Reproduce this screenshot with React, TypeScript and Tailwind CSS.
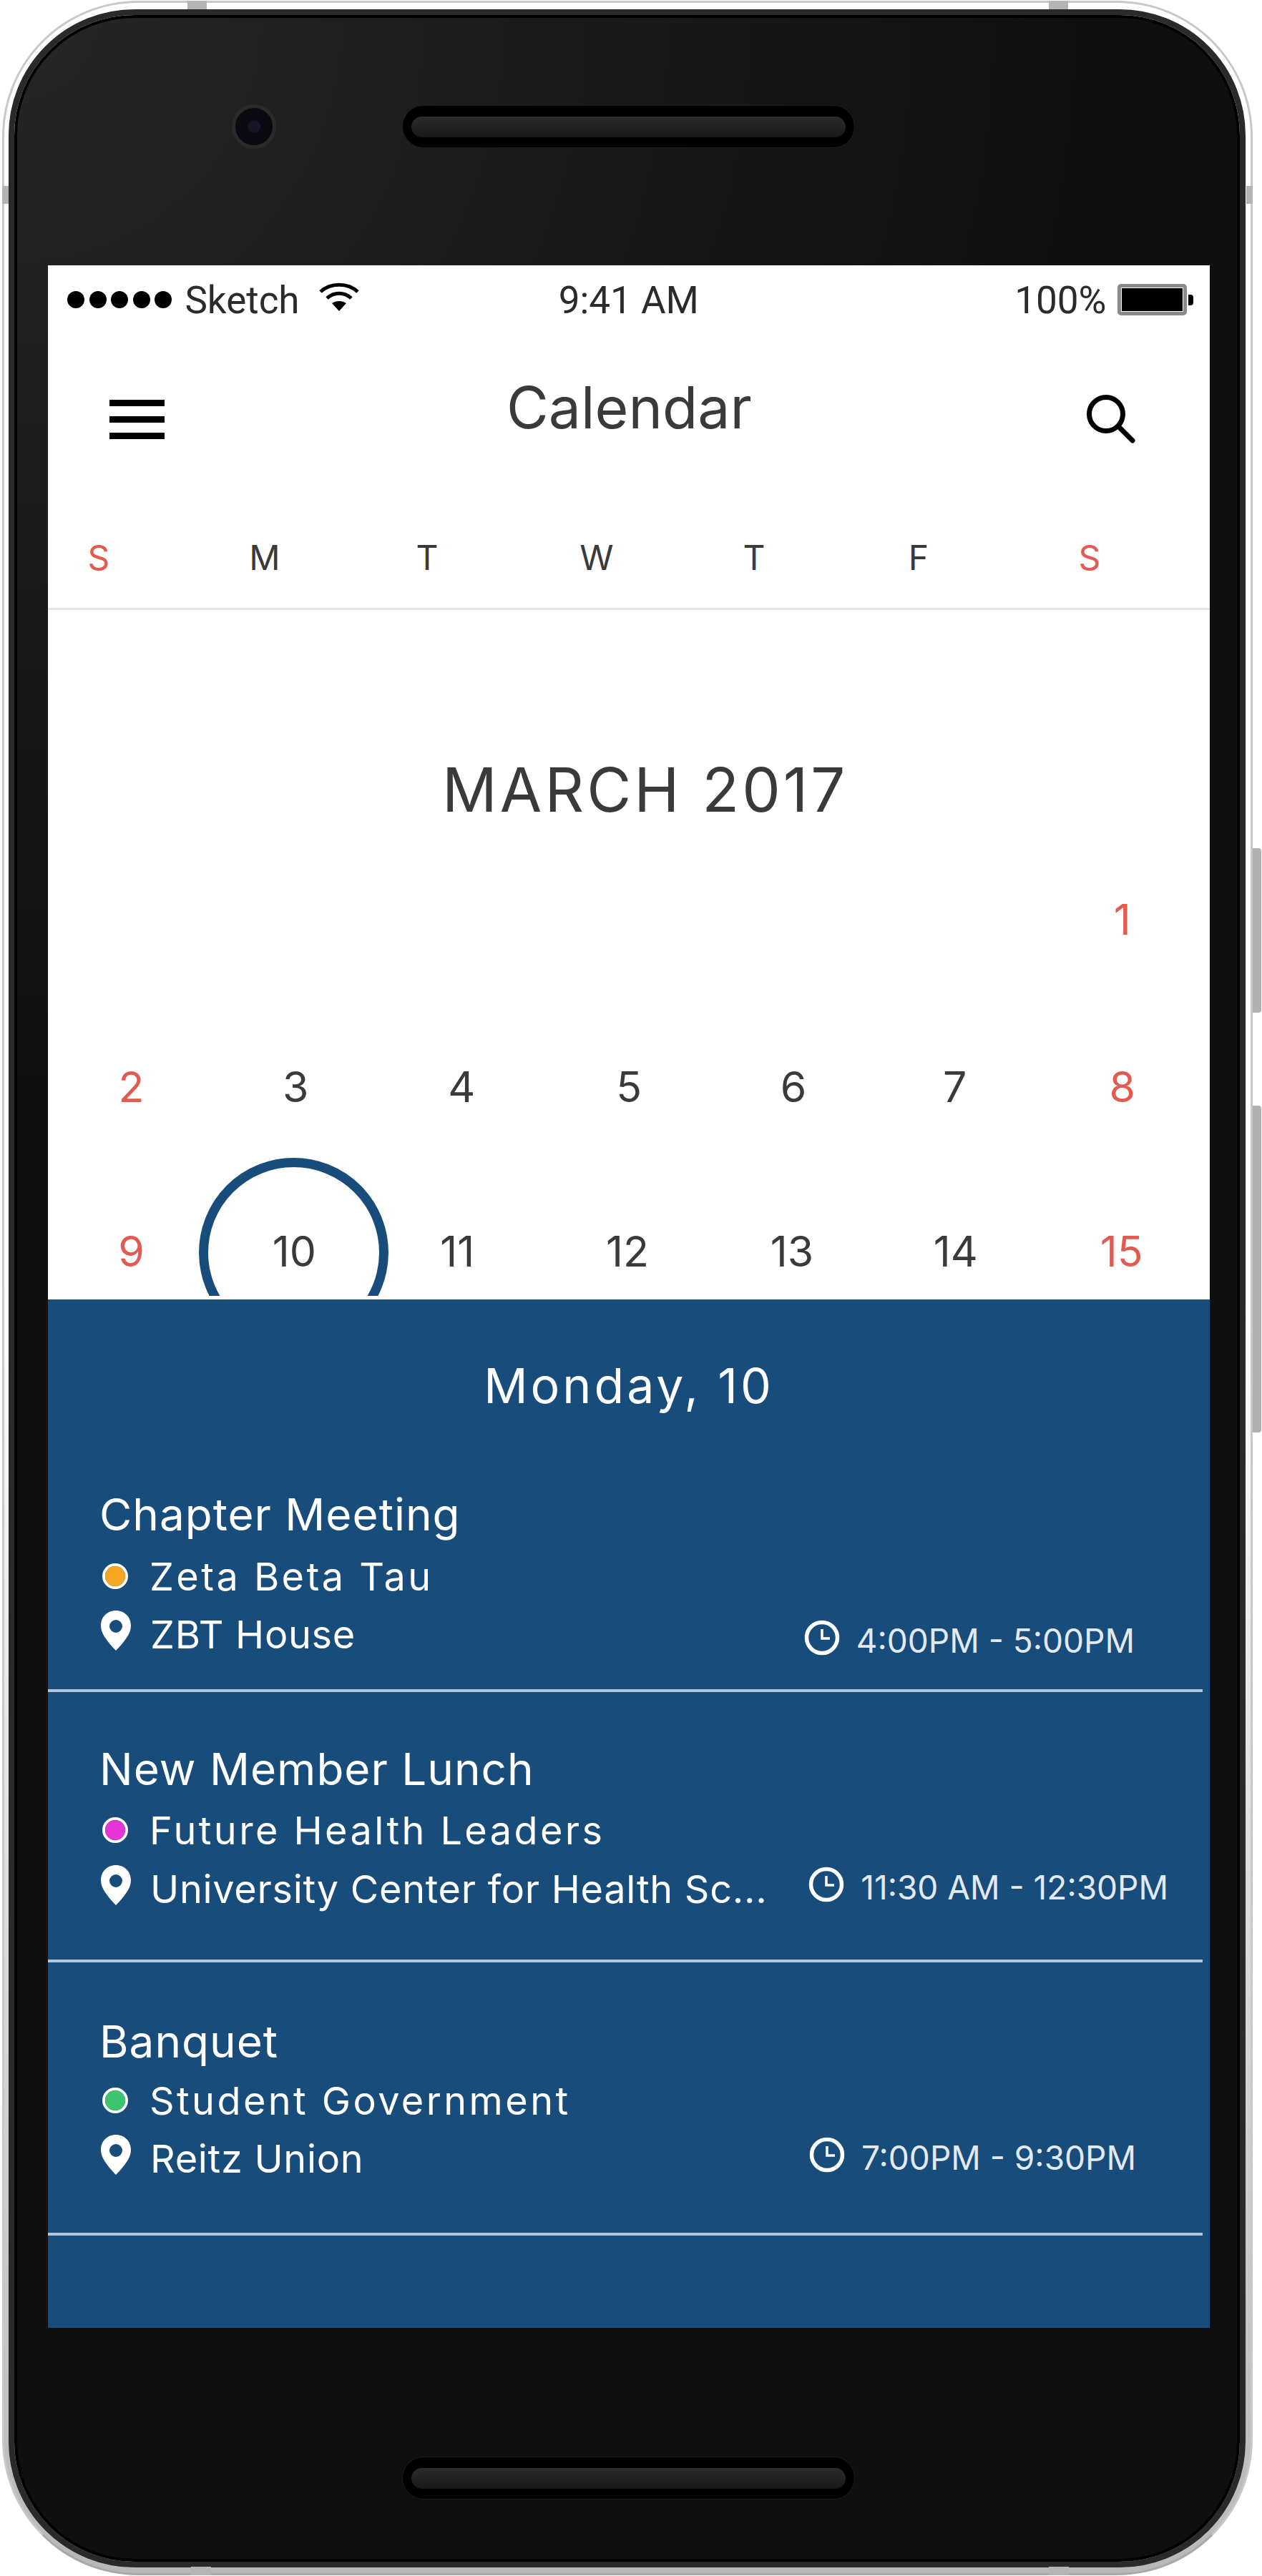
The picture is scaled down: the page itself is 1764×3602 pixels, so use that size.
import React from 'react';

const weekDays = [
  { label: 'S', cls: 'text-[#e25a50] pr-[90px]' },
  { label: 'M', cls: 'pr-[90px]' },
  { label: 'T', cls: 'pr-[100px]' },
  { label: 'W', cls: 'pr-[90px]' },
  { label: 'T', cls: 'pr-[114px]' },
  { label: 'F', cls: 'pr-[118px]' },
  { label: 'S', cls: 'text-[#e25a50] pr-[104px]' },
];

const rows = [
  {
    h: 'h-[232px]',
    days: [
      { d: '', cls: '' },
      { d: '', cls: '' },
      { d: '', cls: '' },
      { d: '', cls: '' },
      { d: '', cls: '' },
      { d: '', cls: '' },
      { d: '1', cls: 'pr-[12px] text-[#e25a50]' },
    ],
  },
  {
    h: 'h-[236px]',
    days: [
      { d: '2', cls: 'text-[#e25a50]' },
      { d: '3', cls: 'pr-[4px]' },
      { d: '4', cls: 'pr-[4px]' },
      { d: '5', cls: '' },
      { d: '6', cls: 'pr-[4px]' },
      { d: '7', cls: 'pr-[16px]' },
      { d: '8', cls: 'pr-[12px] text-[#e25a50]' },
    ],
  },
  {
    h: 'h-[224px]',
    days: [
      { d: '9', cls: 'text-[#e25a50]' },
      { d: '10', cls: 'pr-[8px]' },
      { d: '11', cls: 'pr-[16px]' },
      { d: '12', cls: 'pr-[4px]' },
      { d: '13', cls: 'pr-[8px]' },
      { d: '14', cls: 'pr-[14px]' },
      { d: '15', cls: 'pr-[14px] text-[#e25a50]' },
    ],
  },
];

const events = [
  {
    title: 'Chapter Meeting',
    org: 'Zeta Beta Tau',
    dot: 'bg-[#f5a623]',
    place: 'ZBT House',
    time: '4:00PM - 5:00PM',
    pad: 'pt-0 h-[280px]',
    orgMt: 'mt-[24px]',
    placeMt: 'mt-[21px]',
    timeCls: 'mr-[95px] mt-[18px]',
  },
  {
    title: 'New Member Lunch',
    org: 'Future Health Leaders',
    dot: 'bg-[#e535d6]',
    place: 'University Center for Health Sc...',
    time: '11:30 AM - 12:30PM',
    pad: 'pt-[76px] h-[378px]',
    orgMt: 'mt-[23px]',
    placeMt: 'mt-[22px]',
    timeCls: 'mr-[48px] mt-[-4px]',
  },
  {
    title: 'Banquet',
    org: 'Student Government',
    dot: 'bg-[#3cc46e]',
    place: 'Reitz Union',
    time: '7:00PM - 9:30PM',
    pad: 'pt-[79px] h-[382px]',
    orgMt: 'mt-[20px]',
    placeMt: 'mt-[21px]',
    timeCls: 'mr-[93px] mt-[-2px]',
  },
];

const Pin = () => (
  <svg width="44" height="56" viewBox="0 0 44 56" className="shrink-0">
    <path
      fillRule="evenodd"
      fill="#fff"
      d="M22 0C10 0 1 9 1 21c0 6 2 11 6 17 4 6 9 12 15 18 6-6 11-12 15-18 4-6 6-11 6-17C43 9 34 0 22 0Zm0 13a9 9 0 1 1 0 18 9 9 0 0 1 0-18Z"
    />
  </svg>
);

const Clock = () => (
  <svg width="50" height="50" viewBox="0 0 50 50" fill="none" stroke="#fff" className="shrink-0">
    <circle cx="25" cy="25" r="21.5" strokeWidth="5.5" />
    <path d="M25 13v13h11" strokeWidth="3.5" />
  </svg>
);

const Wifi = () => (
  <svg width="56" height="40" viewBox="0 0 56 40" fill="none" stroke="#000" strokeWidth="5">
    <path d="M2 13C16 0 40 0 54 13" />
    <path d="M11 22c10-9 24-9 34 0" />
    <path d="M28 40 18 29c6-4 14-4 20 0L28 40Z" fill="#000" stroke="none" />
  </svg>
);

const Search = () => (
  <svg width="70" height="70" viewBox="0 0 70 70" fill="none" stroke="#000" strokeWidth="7">
    <circle cx="28" cy="28" r="23.5" />
    <path d="M45 45 65 65" strokeLinecap="round" />
  </svg>
);

const Speaker = () => (
  <div className="w-[633px] h-[60px] rounded-full bg-black border border-[#1c1c1c] px-[12px] flex items-center">
    <div className="w-full h-[29px] rounded-full bg-gradient-to-b from-[#2c2c2c] to-[#181818]" />
  </div>
);

const Tick = ({ cls }: { cls: string }) => <div className={`absolute bg-[#b4b4b4] ${cls}`} />;

export default function App() {
  return (
    <div className="relative w-[1764px] h-[3602px] bg-white overflow-hidden font-['Inter',sans-serif]">
      {/* side buttons */}
      <div className="absolute left-[1748px] top-[1186px] w-[15px] h-[230px] rounded-r-[4px] bg-[#b0b0b0]" />
      <div className="absolute left-[1748px] top-[1546px] w-[15px] h-[457px] rounded-r-[4px] bg-[#b0b0b0]" />

      <div className="absolute left-[3px] top-[1px] w-[1748px] h-[3600px] rounded-[190px] border-[3px] border-[#c8c8c8] border-b-[#a8a8a8] bg-gradient-to-b from-white via-white to-[#b8b8b8] pl-[6px] pr-[7px] pt-[9px] pb-[8px]">
        <div className="h-full rounded-[176px] border-[8px] border-[#2a2a2a]">
          <div className="h-full rounded-[168px] border-[4px] border-black bg-[radial-gradient(circle_at_0%_0%,#262626_0%,#0f0f0f_38%)] flex flex-col">
            {/* top bezel */}
            <div className="h-[346px] shrink-0 pt-[122px] pl-[300px] flex items-start">
              <div className="mt-[-1px] w-[62px] h-[62px] rounded-full border-[5px] border-[#2a2a2a] bg-[#0b0a12] flex items-center justify-center">
                <div className="w-[18px] h-[18px] rounded-full bg-[#17142a]" />
              </div>
              <div className="ml-[176px]">
                <Speaker />
              </div>
            </div>

            {/* screen */}
            <div className="ml-[43px] mr-[38px] h-[2884px] shrink-0 bg-white flex flex-col">
              {/* status bar */}
              <div className="h-[96px] pt-[3px] shrink-0 flex items-center pl-[27px] pr-[23px] text-[53px] text-[#2b2b2b] font-['Roboto',sans-serif]">
                <div className="flex gap-[6.6px] -mt-[3px]">
                  {[0, 1, 2, 3, 4].map((i) => (
                    <div key={i} className="w-[24px] h-[24px] rounded-full bg-black" />
                  ))}
                </div>
                <span className="ml-[18px] w-[188px]">Sketch</span>
                <div className="mb-[11px]">
                  <Wifi />
                </div>
                <span className="ml-[279px] w-[640px]">9:41 AM</span>
                <span>100%</span>
                <div className="ml-[16px] -mt-[3px] w-[97px] h-[44px] rounded-[5px] border-[5px] border-[#8a8a8a] p-[1px]">
                  <div className="w-full h-full bg-black" />
                </div>
                <div className="ml-[2px] -mt-[3px] w-[7px] h-[15px] rounded-r-[4px] bg-black" />
              </div>

              {/* header */}
              <div className="h-[233px] shrink-0 flex items-start pl-[86px]">
                <div className="mt-[92px] w-[77px] flex flex-col gap-[14px]">
                  <div className="h-[9px] bg-black" />
                  <div className="h-[9px] bg-black" />
                  <div className="h-[9px] bg-black" />
                </div>
                <div className="ml-[478px] w-[811px] pt-[53px] text-[80.5px] leading-[100px] text-[#3a3a3a]">Calendar</div>
                <div className="mt-[84px] -ml-[1px]">
                  <Search />
                </div>
              </div>

              {/* weekday row */}
              <div className="h-[153px] shrink-0 border-b-[3px] border-[#e6e6e6] grid grid-cols-7 items-center pt-[9px] text-[48px] text-[#3a3a3a] text-center">
                {weekDays.map((d, i) => (
                  <div key={i} className={d.cls}>
                    {d.label}
                  </div>
                ))}
              </div>

              {/* month */}
              <div className="h-[959px] shrink-0 overflow-hidden">
                <div className="h-[317px] pt-[202px] pl-[551px] text-[85px] leading-[100px] tracking-[4px] text-[#3a3a3a]">MARCH 2017</div>
                {rows.map((row, r) => (
                  <div key={r} className={`grid grid-cols-7 items-center text-[59px] text-[#3a3a3a] text-center pl-[1px] ${row.h}`}>
                    {row.days.map((c, i) => (
                      <div key={i} className={`relative w-[231px] ${c.cls}`}>
                        {c.d === '10' && (
                          <div className="absolute left-[-22px] top-[-87px] w-[265px] h-[265px] rounded-full border-[13px] border-[#184c7b]" />
                        )}
                        <span className="relative">{c.d}</span>
                      </div>
                    ))}
                  </div>
                ))}
              </div>
              <div className="h-[5px] shrink-0" />

              {/* day sheet */}
              <div className="flex-1 bg-[#184c7b] text-white">
                <div className="h-[269px] pt-[80px] text-center text-[68px] leading-[80px] tracking-[4px]">Monday, 10</div>
                {events.map((e) => (
                  <div key={e.title} className={`mr-[10px] pl-[72px] border-b-[4px] border-[#b3c7da] ${e.pad}`}>
                    <div className="h-[64px] text-[62px] leading-[64px] tracking-[1px]">{e.title}</div>
                    <div className={`${e.orgMt} h-[60px] flex items-center text-[54px] tracking-[3.4px]`}>
                      <div className="ml-[4px] w-[36px] h-[36px] rounded-full border-[4px] border-white shrink-0 mr-[30px]">
                        <div className={`w-full h-full rounded-full ${e.dot}`} />
                      </div>
                      {e.org}
                    </div>
                    <div className={`${e.placeMt} h-[60px] flex items-center text-[54px] tracking-[0.7px]`}>
                      <div className="ml-[1px] mr-[26px] mb-[10px]">
                        <Pin />
                      </div>
                      <span className="flex-1 whitespace-nowrap">{e.place}</span>
                      <div className={`flex items-center text-[46px] tracking-normal text-[#e3e9f0] ${e.timeCls}`}>
                        <div className="mr-[23px] mb-[8px]">
                          <Clock />
                        </div>
                        {e.time}
                      </div>
                    </div>
                  </div>
                ))}
              </div>
            </div>

            {/* bottom bezel */}
            <div className="flex-1 pt-[180px] pl-[538px]">
              <Speaker />
            </div>
          </div>
        </div>
      </div>

      {/* antenna marks on the band */}
      <Tick cls="left-[262px] top-[1px] w-[27px] h-[12px]" />
      <Tick cls="left-[1466px] top-[1px] w-[27px] h-[12px]" />
      <Tick cls="left-[3px] top-[260px] w-[9px] h-[25px]" />
      <Tick cls="left-[1742px] top-[260px] w-[9px] h-[25px]" />
      <Tick cls="left-[267px] top-[3589px] w-[28px] h-[12px] bg-[#8c8c8c]" />
      <Tick cls="left-[1466px] top-[3589px] w-[28px] h-[12px] bg-[#8c8c8c]" />
    </div>
  );
}
